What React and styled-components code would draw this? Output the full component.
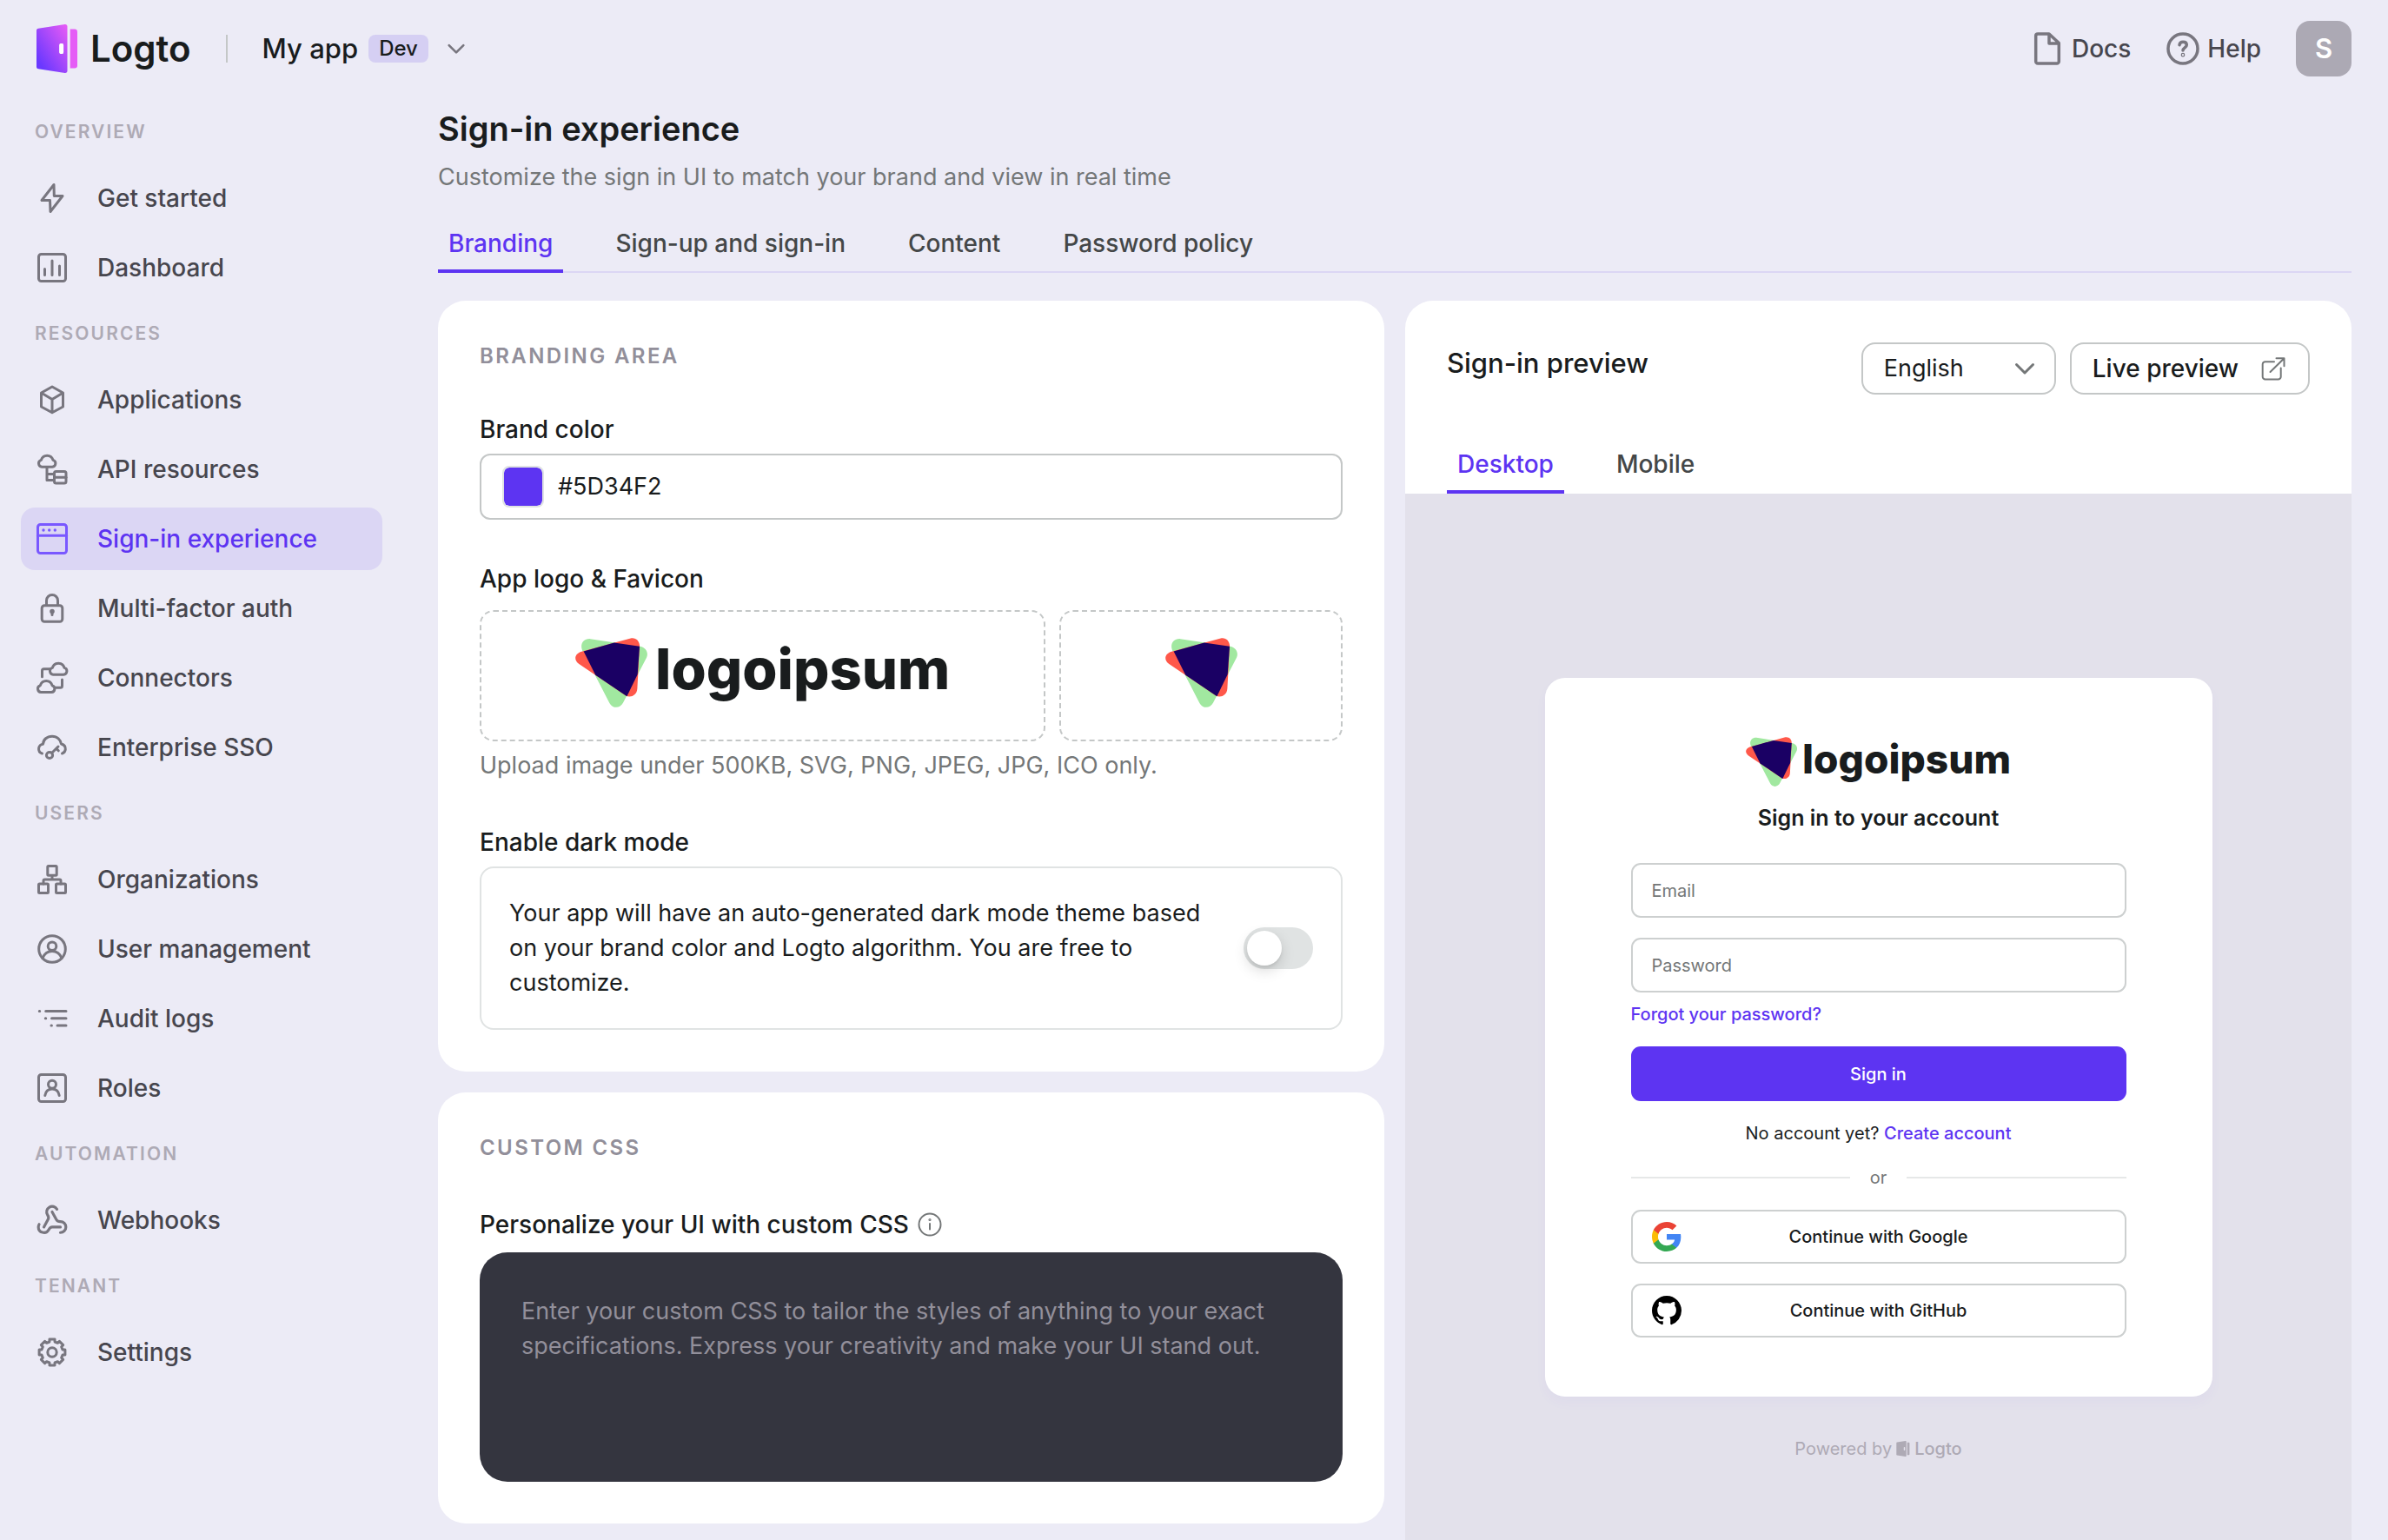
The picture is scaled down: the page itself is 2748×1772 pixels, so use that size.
import React, { useState } from 'react';
import styled, { createGlobalStyle, css } from 'styled-components';
import { Webhook } from 'lucide-react';

const color = {
  page: '#ecebf6',
  surface: '#ffffff',
  canvas: '#e3e1eb',
  text: '#191c1d',
  textStrong: '#47464e',
  tab: '#444748',
  muted: '#747778',
  faint: '#aeaab5',
  caption: '#928f9a',
  icon: '#78767f',
  brand: '#5d34f2',
  brandIcon: '#7958ff',
  brandSoft: '#dbd6f4',
  border: '#c4c7c7',
  borderField: '#cdd0d0',
  borderSoft: '#e0e3e3',
  code: '#34353f',
};

const GlobalStyle = createGlobalStyle`
  *, *::before, *::after { box-sizing: border-box; }
  body {
    margin: 0;
    background: ${color.page};
    color: ${color.text};
    font-family: Inter, Roboto, "Liberation Sans", sans-serif;
    font-size: 27px;
    line-height: 40px;
    -webkit-font-smoothing: antialiased;
  }
  button, input, select, textarea { font: inherit; color: inherit; margin: 0; }
  a { color: inherit; text-decoration: none; }
  h1, h2, h3, p, ul { margin: 0; padding: 0; }
  ul { list-style: none; }
  svg { display: block; flex: none; }
`;

const labelText = css`
  font-size: 28px;
  font-weight: 500;
`;

/* ---------- page frame ---------- */

const Page = styled.div`
  min-height: 100vh;
  display: flex;
  flex-direction: column;
`;

const TopBar = styled.header`
  height: 112px;
  flex: none;
  padding: 0 42px;
  display: flex;
  align-items: center;
`;

const Body = styled.div`
  flex: 1;
  display: flex;
`;

const Sidebar = styled.nav`
  width: 464px;
  flex: none;
  padding: 0 24px 24px;
`;

const Main = styled.main`
  flex: 1;
  min-width: 0;
  padding: 8px 42px 0 40px;
  display: flex;
  flex-direction: column;
`;

const LogoLink = styled.a`
  display: flex;
  align-items: center;
  gap: 14px;
  font-size: 42px;
  font-weight: 600;
  line-height: 56px;
`;

const Divider = styled.span`
  width: 2px;
  height: 32px;
  margin: 0 40px;
  background: ${color.border};
`;

const TenantButton = styled.button`
  display: flex;
  align-items: center;
  gap: 12px;
  padding: 0;
  border: 0;
  background: none;
  font-size: 31px;
  font-weight: 500;
  svg { color: ${color.icon}; }
`;

const Tag = styled.span`
  padding: 0 12px;
  border-radius: 8px;
  background: #d5cff3;
  font-size: 24px;
  font-weight: 500;
  line-height: 32px;
`;

const TopActions = styled.div`
  margin-left: auto;
  display: flex;
  align-items: center;
  gap: 40px;
`;

const TopLink = styled.a`
  ${labelText}
  display: flex;
  align-items: center;
  gap: 8px;
  color: ${color.textStrong};
  svg { color: ${color.icon}; }
`;

const Avatar = styled.button`
  width: 64px;
  height: 64px;
  padding: 0;
  border: 0;
  border-radius: 16px;
  background: #aca9b4;
  color: #fff;
  font-size: 31px;
  font-weight: 600;
`;

/* ---------- sidebar ---------- */

const NavSection = styled.section`
  padding-top: 24px;
`;

const NavHeading = styled.h2`
  padding: 0 16px;
  margin-bottom: 24px;
  color: ${color.faint};
  font-size: 21px;
  font-weight: 600;
  line-height: 32px;
  letter-spacing: 0.1em;
  text-transform: uppercase;
`;

const NavList = styled.ul`
  display: grid;
  gap: 8px;
`;

const NavLink = styled.a`
  ${labelText}
  height: 72px;
  padding: 0 16px;
  display: flex;
  align-items: center;
  gap: 32px;
  border-radius: 16px;
  color: ${(p) => (p.$active ? color.brand : color.textStrong)};
  background: ${(p) => (p.$active ? color.brandSoft : 'transparent')};
  svg { color: ${(p) => (p.$active ? color.brandIcon : color.icon)}; }
`;

const IconSlot = styled.span`
  width: 40px;
  height: 40px;
  display: grid;
  place-items: center;
  flex: none;
`;

/* ---------- main heading and tabs ---------- */

const PageTitle = styled.h1`
  font-size: 38px;
  font-weight: 600;
  line-height: 56px;
`;

const Subtitle = styled.p`
  margin-top: 8px;
  color: ${color.muted};
`;

const Tabs = styled.div`
  display: flex;
  gap: 48px;
  ${(p) => p.$line && css`box-shadow: inset 0 -2px 0 ${color.brandSoft};`}
`;

const Tab = styled.button`
  ${labelText}
  padding: 0 12px 10px;
  border: 0;
  border-bottom: 4px solid ${(p) => (p.$active ? color.brand : 'transparent')};
  border-radius: 3px 3px 0 0;
  background: none;
  color: ${(p) => (p.$active ? color.brand : color.tab)};
  line-height: 40px;
`;

const PageTabs = styled(Tabs)`
  margin-top: 36px;
`;

const Columns = styled.div`
  flex: 1;
  margin-top: 32px;
  display: grid;
  grid-template-columns: minmax(0, 1fr) minmax(0, 1fr);
  gap: 24px;
`;

const Column = styled.div`
  display: flex;
  flex-direction: column;
  gap: 24px;
  padding-bottom: 16px;
`;

/* ---------- settings cards ---------- */

const Card = styled.section`
  padding: 48px;
  border-radius: 32px;
  background: ${color.surface};
  display: grid;
  gap: 48px;
`;

const CardTitle = styled.h2`
  color: ${color.caption};
  font-size: 24px;
  font-weight: 600;
  line-height: 32px;
  letter-spacing: 0.1em;
  text-transform: uppercase;
`;

const Field = styled.div`
  display: grid;
  gap: 8px;
`;

const FieldLabel = styled.label`
  ${labelText}
`;

const FieldLabelRow = styled.div`
  height: 48px;
  display: flex;
  align-items: center;
  gap: 8px;
`;

const InfoButton = styled.button`
  padding: 0;
  border: 0;
  background: none;
  color: ${color.muted};
`;

const ColorBox = styled.div`
  height: 76px;
  padding: 0 24px;
  display: flex;
  align-items: center;
  gap: 16px;
  border: 2px solid ${color.border};
  border-radius: 12px;
`;

const Swatch = styled.input`
  width: 48px;
  height: 48px;
  padding: 0;
  appearance: none;
  border: 2px solid ${color.borderSoft};
  border-radius: 8px;
  background: none;
  overflow: hidden;
  &::-webkit-color-swatch-wrapper { padding: 0; }
  &::-webkit-color-swatch { border: 0; border-radius: 6px; }
`;

const ColorInput = styled.input`
  flex: 1;
  min-width: 0;
  padding: 0;
  border: 0;
  outline: 0;
  background: none;
`;

const Uploads = styled.div`
  margin-top: 8px;
  display: grid;
  grid-template-columns: 2fr 1fr;
  gap: 16px;
`;

const UploadButton = styled.button`
  height: 151px;
  padding: 0 0 8px;
  display: flex;
  align-items: center;
  justify-content: center;
  border: 2px dashed ${color.border};
  border-radius: 16px;
  background: none;
`;

const Hint = styled.p`
  color: ${color.muted};
`;

const SwitchBox = styled.label`
  padding: 32px;
  display: flex;
  align-items: center;
  gap: 40px;
  border: 2px solid ${color.borderSoft};
  border-radius: 16px;
`;

const SwitchText = styled.span`
  flex: 1;
`;

const Switch = styled.input`
  appearance: none;
  width: 80px;
  height: 48px;
  padding: 4px;
  flex: none;
  display: flex;
  border-radius: 24px;
  background: ${color.borderSoft};
  &::before {
    content: '';
    width: 40px;
    height: 40px;
    border-radius: 50%;
    background: #fff;
    box-shadow: 0 6px 16px rgba(0, 0, 0, 0.15), 0 3px 3px rgba(0, 0, 0, 0.06);
  }
  &:checked { background: ${color.brand}; justify-content: flex-end; }
`;

const CodeArea = styled.textarea`
  display: block;
  width: 100%;
  height: 264px;
  padding: 48px;
  border: 0;
  border-radius: 32px;
  outline: 0;
  resize: none;
  background: ${color.code};
  color: #f7f8f8;
  &::placeholder { color: ${color.caption}; opacity: 1; }
`;

/* ---------- brand logo ---------- */

const Brand = styled.span`
  display: flex;
  align-items: flex-start;
  gap: ${(p) => (p.$small ? 6 : 9)}px;
  height: ${(p) => (p.$small ? 57 : 80)}px;
  font-size: ${(p) => (p.$small ? 46 : 65)}px;
  line-height: ${(p) => (p.$small ? 51 : 72)}px;
  font-weight: 800;
  svg { height: 100%; width: auto; }
`;

/* ---------- preview panel ---------- */

const Preview = styled.section`
  display: flex;
  flex-direction: column;
  border-radius: 32px 32px 0 0;
  overflow: hidden;
  background: ${color.surface};
`;

const PreviewHead = styled.div`
  padding: 48px 48px 60px;
  display: flex;
  align-items: flex-start;
  gap: 16px;
`;

const PreviewTitle = styled.h2`
  flex: 1;
  font-size: 31px;
  font-weight: 500;
  line-height: 48px;
`;

const SelectBox = styled.span`
  position: relative;
  width: 224px;
  height: 60px;
  svg {
    position: absolute;
    right: 20px;
    top: 14px;
    pointer-events: none;
    color: ${color.muted};
  }
`;

const outlined = css`
  border: 2px solid ${color.border};
  border-radius: 16px;
  background: ${color.surface};
`;

const Select = styled.select`
  ${outlined}
  width: 100%;
  height: 100%;
  padding: 0 24px;
  appearance: none;
  outline: 0;
`;

const OutlineButton = styled.button`
  ${outlined}
  ${labelText}
  height: 60px;
  padding: 0 24px;
  display: flex;
  align-items: center;
  gap: 24px;
  svg { color: ${color.muted}; }
`;

const PreviewTabs = styled(Tabs)`
  padding: 0 48px;
`;

const Canvas = styled.div`
  flex: 1;
  padding: 212px 48px 80px;
  display: flex;
  flex-direction: column;
  align-items: center;
  gap: 46px;
  background: ${color.canvas};
  font-size: 20px;
  line-height: 28px;
`;

const SignInCard = styled.form`
  width: 100%;
  max-width: 768px;
  padding: 68px 99px;
  display: grid;
  gap: 23px;
  border-radius: 23px;
  background: ${color.surface};
  box-shadow: 0 7px 14px rgba(93, 52, 242, 0.03);
`;

const SignInHead = styled.div`
  display: grid;
  justify-items: center;
  gap: 20px;
  margin-bottom: 13px;
`;

const SignInTitle = styled.h3`
  font-size: 25px;
  font-weight: 600;
  line-height: 32px;
`;

const TextInput = styled.input`
  width: 100%;
  height: 63px;
  padding: 0 22px;
  border: 2px solid ${color.borderField};
  border-radius: 11px;
  background: ${color.surface};
  outline: 0;
  &::placeholder { color: ${color.muted}; opacity: 1; }
`;

const PasswordGroup = styled.div`
  display: grid;
  justify-items: start;
  gap: 11px;
`;

const BrandLink = styled.a`
  color: ${color.brand};
  font-weight: 500;
`;

const SubmitButton = styled.button`
  height: 63px;
  border: 0;
  border-radius: 11px;
  background: ${color.brand};
  color: #fff;
  font-weight: 500;
`;

const Centered = styled.p`
  text-align: center;
`;

const OrLine = styled.div`
  display: flex;
  align-items: center;
  gap: 23px;
  color: ${color.muted};
  &::before, &::after {
    content: '';
    flex: 1;
    height: 2px;
    background: #e6e8e8;
  }
`;

const SocialButton = styled.button`
  height: 62px;
  padding: 0 22px;
  display: grid;
  grid-template-columns: 34px 1fr 34px;
  align-items: center;
  border: 2px solid ${color.borderField};
  border-radius: 11px;
  background: ${color.surface};
  font-weight: 500;
`;

const Powered = styled.p`
  display: flex;
  align-items: center;
  gap: 5px;
  color: ${color.faint};
  strong { font-weight: 500; }
`;

/* ---------- drawings ---------- */

const Icon = ({ children, size = 40, box = 40, stroke = 3 }) => (
  <svg
    width={size}
    height={size}
    viewBox={`0 0 ${box} ${box}`}
    fill="none"
    stroke="currentColor"
    strokeWidth={stroke}
    strokeLinecap="round"
    strokeLinejoin="round"
    aria-hidden="true"
  >
    {children}
  </svg>
);

const CLOUD = 'M8.2 17.2a4 4 0 0 1-.9-7.8C8.3 6.5 10.8 4.2 14.2 4.2s5.9 2.3 6.9 5.2a4 4 0 0 1-.9 7.8Z';

const gearPath = () => {
  const points = [];
  for (let i = 0; i < 8; i += 1) {
    const mid = (i * Math.PI) / 4;
    [[-0.25, 12.4], [-0.2, 15.2], [0.2, 15.2], [0.25, 12.4]].forEach(([offset, r]) => {
      points.push(`${(20 + r * Math.sin(mid + offset)).toFixed(2)} ${(20 - r * Math.cos(mid + offset)).toFixed(2)}`);
    });
  }
  return `M${points.join('L')}Z`;
};

const icons = {
  bolt: <path d="M22 4.5 8 22.5h9.5L18 35.5l14-18H22.3Z" />,
  chart: (
    <>
      <rect x="4.5" y="4.5" width="31" height="31" rx="3" />
      <path d="M11.5 21.5v7M20 12v16.5M28.5 18v10.5" />
    </>
  ),
  cube: <path d="M20 5 32.5 12v16L20 34.8 7.5 28V12ZM7.5 12 20 19.5 32.5 12M20 19.5v15" />,
  api: (
    <>
      <path d={CLOUD} />
      <path d="M14 17.5v15h8M14 25.500h8" />
      <rect x="22.5" y="22.5" width="13.5" height="13.5" rx="2" />
      <path d="M22.5 29.3H36" />
    </>
  ),
  window: (
    <>
      <rect x="3.5" y="3.5" width="33" height="33" rx="3" />
      <path d="M3.5 16.2h33" />
      <g fill="currentColor" stroke="none">
        <circle cx="10" cy="10" r="1.7" />
        <circle cx="16.7" cy="10" r="1.7" />
        <circle cx="23.3" cy="10" r="1.7" />
      </g>
    </>
  ),
  lock: (
    <>
      <rect x="8.2" y="16.8" width="23.6" height="18.4" rx="3" />
      <path d="M13.5 16.5V11a6.5 6.5 0 0 1 13 0v5.5M20 24v3.5" />
      <circle cx="20" cy="23.5" r="1.3" />
    </>
  ),
  connectors: (
    <>
      <path d={CLOUD} transform="translate(13 -1)" />
      <path d={CLOUD} transform="translate(-1 19.3)" />
      <path d="M17 9.7h-6.5a2 2 0 0 0-2 2v7M24 31.2h5.5a2 2 0 0 0 2-2V22" />
    </>
  ),
  sso: (
    <>
      <path d="M8.5 27C5.500 26 4.300 23.500 4.600 21c.3-2.600 2.600-4.600 4.900-4.800C9.800 11 14 7.200 20 7.200s9.500 4 10.500 8.800c3 .8 5 3.300 4.800 6.200-.2 2.500-2 4.300-3.800 4.800" />
      <circle cx="17" cy="29" r="3.6" />
      <path d="M19.8 26.200 27 19M25 21.500l2.300 2.300" />
    </>
  ),
  org: (
    <>
      <rect x="14.8" y="4.5" width="10.4" height="10.8" rx="1" />
      <rect x="4.5" y="25" width="11" height="10.5" rx="1" />
      <rect x="24.5" y="25" width="11" height="10.5" rx="1" />
      <path d="M20 15.5V20M10 25v-3.500a1.500 1.500 0 0 1 1.500-1.500h17a1.500 1.500 0 0 1 1.500 1.500V25" />
    </>
  ),
  user: (
    <>
      <circle cx="20" cy="20" r="15.3" />
      <circle cx="20" cy="16.7" r="4.8" />
      <path d="M9 30.5c2.200-5.500 6-8 11-8s8.800 2.500 11 8" />
    </>
  ),
  logs: <path d="M5.3 11.5h.4M12.7 11.5H36M12.3 19.8h.4M19.5 19.8H36M19 28h.4M26 28h10" />,
  role: (
    <>
      <rect x="4.5" y="4.5" width="31" height="31" rx="3" />
      <circle cx="20" cy="15.8" r="4.5" />
      <path d="M11.8 28.500c.8-4.600 3.800-7.400 8.200-7.400s7.400 2.800 8.200 7.400" />
    </>
  ),
  gear: (
    <>
      <path d={gearPath()} />
      <circle cx="20" cy="20" r="5.2" />
    </>
  ),
};

const LogtoDoor = ({ mono, width, height }) => (
  <svg width={width} height={height} viewBox="0 0 48 56" aria-hidden="true">
    <defs>
      <linearGradient id="door" x1="0" y1="1" x2="1" y2="0">
        <stop offset="0.15" stopColor="#6a38ff" />
        <stop offset="1" stopColor="#ea5cf5" />
      </linearGradient>
    </defs>
    <path
      fill={mono ? 'currentColor' : 'url(#door)'}
      fillRule="evenodd"
      d="M2.200 4.700 32.700.1C34.400-.1 35.500 1 35.500 2.500v51c0 1.500-1.100 2.600-2.800 2.400L2.200 51.300C.8 51 0 50.200 0 48.800V7.200c0-1.400.8-2.200 2.200-2.500ZM28.300 22c-1.200 0-2 .8-2 2v8c0 1.200.8 2 2 2h.8c1.200 0 2-.8 2-2v-8c0-1.200-.8-2-2-2Z"
    />
    {!mono && <rect x="26.3" y="22" width="4.8" height="12" rx="2" fill="#fff" />}
    <path fill={mono ? 'currentColor' : '#e55df6'} d="M38.700 5.500h5.300c1.800 0 3 1.200 3 3v39c0 1.800-1.200 3-3 3h-5.300Z" />
  </svg>
);

const BrandMark = ({ width, height }) => (
  <svg width={width} height={height} viewBox="23 24 250 240" aria-hidden="true">
    <path
      fill="#a1e8a0"
      d="M75 27 248 53c20 4 30 22 22 39l-81 156c-10 20-36 22-47 2L50 72C36 48 50 25 75 27Z"
    />
    <path
      fill="#ff584a"
      d="M45 71 215 25c17-4 31 9 31 26l-8 148c-1 24-24 34-41 24L36 114c-20-14-15-36 9-43Z"
    />
    <path fill="#1a0064" d="m52 70 106-30 88 13-7 97-37 76L93 152Z" />
  </svg>
);

const BrandLogo = ({ small }) => (
  <Brand $small={small}>
    <BrandMark width={83} height={80} />
    logoipsum
  </Brand>
);

const Chevron = ({ size = 32, stroke = 3 }) => (
  <Icon size={size} box={32} stroke={stroke}>
    <path d="m6.5 11.5 9.5 9.5 9.5-9.5" />
  </Icon>
);

const GoogleLogo = () => (
  <svg width="34" height="34" viewBox="0 0 18 18" aria-hidden="true">
    <path fill="#4285f4" d="M17.64 9.2c0-.637-.057-1.251-.164-1.84H9v3.481h4.844c-.209 1.125-.843 2.078-1.796 2.717v2.258h2.908c1.702-1.567 2.684-3.874 2.684-6.615z" />
    <path fill="#34a853" d="M9 18c2.43 0 4.467-.806 5.956-2.184l-2.908-2.258c-.806.54-1.837.86-3.048.86-2.344 0-4.328-1.584-5.036-3.711H.957v2.332C2.438 15.983 5.482 18 9 18z" />
    <path fill="#fbbc05" d="M3.964 10.707c-.18-.54-.282-1.117-.282-1.707s.102-1.167.282-1.707V4.961H.957C.347 6.175 0 7.55 0 9s.348 2.825.957 4.039l3.007-2.332z" />
    <path fill="#ea4335" d="M9 3.58c1.321 0 2.508.454 3.44 1.345l2.582-2.58C13.463.891 11.426 0 9 0 5.482 0 2.438 2.017.957 4.961L3.964 7.293C4.672 5.163 6.656 3.58 9 3.58z" />
  </svg>
);

const GitHubLogo = () => (
  <svg width="34" height="34" viewBox="0 0 16 16" fill="#000" aria-hidden="true">
    <path d="M8 0C3.58 0 0 3.58 0 8c0 3.54 2.29 6.53 5.47 7.59.4.07.55-.17.55-.38 0-.19-.01-.82-.01-1.49-2.01.37-2.53-.49-2.69-.94-.09-.23-.48-.94-.82-1.13-.28-.15-.68-.52-.01-.53.63-.01 1.08.58 1.23.82.72 1.21 1.87.87 2.33.66.07-.52.28-.87.51-1.07-1.78-.2-3.64-.89-3.64-3.95 0-.87.31-1.59.82-2.15-.08-.2-.36-1.02.08-2.12 0 0 .67-.21 2.2.82.64-.18 1.32-.27 2-.27.68 0 1.36.09 2 .27 1.53-1.04 2.2-.82 2.2-.82.44 1.1.16 1.92.08 2.12.51.56.82 1.27.82 2.15 0 3.07-1.87 3.75-3.65 3.95.29.25.54.73.54 1.48 0 1.07-.01 1.93-.01 2.2 0 .21.15.46.55.38A8.013 8.013 0 0 0 16 8c0-4.42-3.58-8-8-8z" />
  </svg>
);

/* ---------- content ---------- */

const sections = [
  { title: 'Overview', items: [['bolt', 'Get started'], ['chart', 'Dashboard']] },
  {
    title: 'Resources',
    items: [
      ['cube', 'Applications'],
      ['api', 'API resources'],
      ['window', 'Sign-in experience'],
      ['lock', 'Multi-factor auth'],
      ['connectors', 'Connectors'],
      ['sso', 'Enterprise SSO'],
    ],
  },
  {
    title: 'Users',
    items: [
      ['org', 'Organizations'],
      ['user', 'User management'],
      ['logs', 'Audit logs'],
      ['role', 'Roles'],
    ],
  },
  { title: 'Automation', items: [['webhook', 'Webhooks']] },
  { title: 'Tenant', items: [['gear', 'Settings']] },
];

const NavIcon = ({ name }) => (
  <IconSlot>
    {name === 'webhook' ? <Webhook size={38} strokeWidth={2} /> : <Icon>{icons[name]}</Icon>}
  </IconSlot>
);

const TabList = ({ as: List, items, label, line }) => {
  const [active, setActive] = useState(items[0]);
  return (
    <List role="tablist" aria-label={label} $line={line}>
      {items.map((item) => (
        <Tab
          key={item}
          type="button"
          role="tab"
          aria-selected={item === active}
          $active={item === active}
          onClick={() => setActive(item)}
        >
          {item}
        </Tab>
      ))}
    </List>
  );
};

const BrandingCard = () => {
  const [hex, setHex] = useState('#5D34F2');
  return (
    <Card>
      <CardTitle>Branding area</CardTitle>
      <Field>
        <FieldLabel htmlFor="brand-color">Brand color</FieldLabel>
        <ColorBox>
          <Swatch
            type="color"
            aria-label="Pick brand color"
            value={hex.toLowerCase()}
            onChange={(e) => setHex(e.target.value.toUpperCase())}
          />
          <ColorInput id="brand-color" value={hex} onChange={(e) => setHex(e.target.value)} />
        </ColorBox>
      </Field>
      <Field>
        <FieldLabel as="span">App logo &amp; Favicon</FieldLabel>
        <Uploads>
          <UploadButton type="button">
            <BrandLogo />
          </UploadButton>
          <UploadButton type="button" aria-label="Upload favicon">
            <BrandMark width={83} height={80} />
          </UploadButton>
        </Uploads>
        <Hint>Upload image under 500KB, SVG, PNG, JPEG, JPG, ICO only.</Hint>
      </Field>
      <Field>
        <FieldLabel htmlFor="dark-mode">Enable dark mode</FieldLabel>
        <SwitchBox>
          <SwitchText>
            Your app will have an auto-generated dark mode theme based on your brand color and Logto
            algorithm. You are free to customize.
          </SwitchText>
          <Switch id="dark-mode" type="checkbox" />
        </SwitchBox>
      </Field>
    </Card>
  );
};

const CssCard = () => (
  <Card>
    <CardTitle>Custom CSS</CardTitle>
    <Field>
      <FieldLabelRow>
        <FieldLabel htmlFor="custom-css">Personalize your UI with custom CSS</FieldLabel>
        <InfoButton type="button" aria-label="About custom CSS">
          <Icon size={32} box={32} stroke={2}>
            <circle cx="16" cy="16" r="12.5" />
            <path d="M16 15v6.5" />
            <circle cx="16" cy="10.5" r="0.6" />
          </Icon>
        </InfoButton>
      </FieldLabelRow>
      <CodeArea
        id="custom-css"
        placeholder="Enter your custom CSS to tailor the styles of anything to your exact specifications. Express your creativity and make your UI stand out."
      />
    </Field>
  </Card>
);

const PreviewPanel = () => (
  <Preview>
    <PreviewHead>
      <PreviewTitle>Sign-in preview</PreviewTitle>
      <SelectBox>
        <Select aria-label="Preview language" defaultValue="English">
          <option>English</option>
        </Select>
        <Chevron />
      </SelectBox>
      <OutlineButton type="button">
        Live preview
        <Icon size={32} box={32} stroke={2}>
          <path d="M17 8.2H6.700a3 3 0 0 0-3 3v14.200a3 3 0 0 0 3 3h15a3 3 0 0 0 3-3V15.500M19.500 4.200h9v9M28.500 4.200 12.500 20" />
        </Icon>
      </OutlineButton>
    </PreviewHead>
    <TabList as={PreviewTabs} label="Preview device" items={['Desktop', 'Mobile']} />
    <Canvas>
      <SignInCard onSubmit={(e) => e.preventDefault()}>
        <SignInHead>
          <BrandLogo small />
          <SignInTitle>Sign in to your account</SignInTitle>
        </SignInHead>
        <TextInput type="email" placeholder="Email" aria-label="Email" />
        <PasswordGroup>
          <TextInput type="password" placeholder="Password" aria-label="Password" />
          <BrandLink href="#forgot">Forgot your password?</BrandLink>
        </PasswordGroup>
        <SubmitButton type="submit">Sign in</SubmitButton>
        <Centered>
          No account yet? <BrandLink href="#create">Create account</BrandLink>
        </Centered>
        <OrLine>or</OrLine>
        <SocialButton type="button">
          <GoogleLogo />
          <span>Continue with Google</span>
        </SocialButton>
        <SocialButton type="button">
          <GitHubLogo />
          <span>Continue with GitHub</span>
        </SocialButton>
      </SignInCard>
      <Powered>
        Powered by
        <LogtoDoor mono width={16} height={18} />
        <strong>Logto</strong>
      </Powered>
    </Canvas>
  </Preview>
);

export default function App() {
  return (
    <Page>
      <GlobalStyle />
      <TopBar>
        <LogoLink href="#home">
          <LogtoDoor width={48} height={56} />
          Logto
        </LogoLink>
        <Divider />
        <TenantButton type="button">
          My app
          <Tag>Dev</Tag>
          <IconSlot>
            <Chevron size={28} />
          </IconSlot>
        </TenantButton>
        <TopActions>
          <TopLink href="#docs">
            <Icon stroke={3.5}>
              <path d="M9 3h13l11.300 10.500V34.700a2.300 2.300 0 0 1-2.300 2.300H9a2.300 2.300 0 0 1-2.300-2.300V5.300A2.300 2.300 0 0 1 9 3ZM22 3.500V14h11" />
            </Icon>
            Docs
          </TopLink>
          <TopLink href="#help">
            <Icon stroke={3.5}>
              <circle cx="20" cy="20" r="17" />
              <path d="M16 15.800c.3-2.200 1.900-3.500 4.200-3.500 2.400 0 4.100 1.300 4.100 3.400 0 3-4.300 3.200-4.300 6.300" />
              <circle cx="20" cy="27.2" r="0.6" />
            </Icon>
            Help
          </TopLink>
          <Avatar type="button" aria-label="Account S">
            S
          </Avatar>
        </TopActions>
      </TopBar>
      <Body>
        <Sidebar aria-label="Console">
          {sections.map((section) => (
            <NavSection key={section.title}>
              <NavHeading>{section.title}</NavHeading>
              <NavList>
                {section.items.map(([icon, label]) => {
                  const active = label === 'Sign-in experience';
                  return (
                    <li key={label}>
                      <NavLink href={`#${icon}`} $active={active} aria-current={active ? 'page' : undefined}>
                        <NavIcon name={icon} />
                        {label}
                      </NavLink>
                    </li>
                  );
                })}
              </NavList>
            </NavSection>
          ))}
        </Sidebar>
        <Main>
          <PageTitle>Sign-in experience</PageTitle>
          <Subtitle>Customize the sign in UI to match your brand and view in real time</Subtitle>
          <TabList
            as={PageTabs}
            line
            label="Sign-in experience"
            items={['Branding', 'Sign-up and sign-in', 'Content', 'Password policy']}
          />
          <Columns>
            <Column>
              <BrandingCard />
              <CssCard />
            </Column>
            <PreviewPanel />
          </Columns>
        </Main>
      </Body>
    </Page>
  );
}
